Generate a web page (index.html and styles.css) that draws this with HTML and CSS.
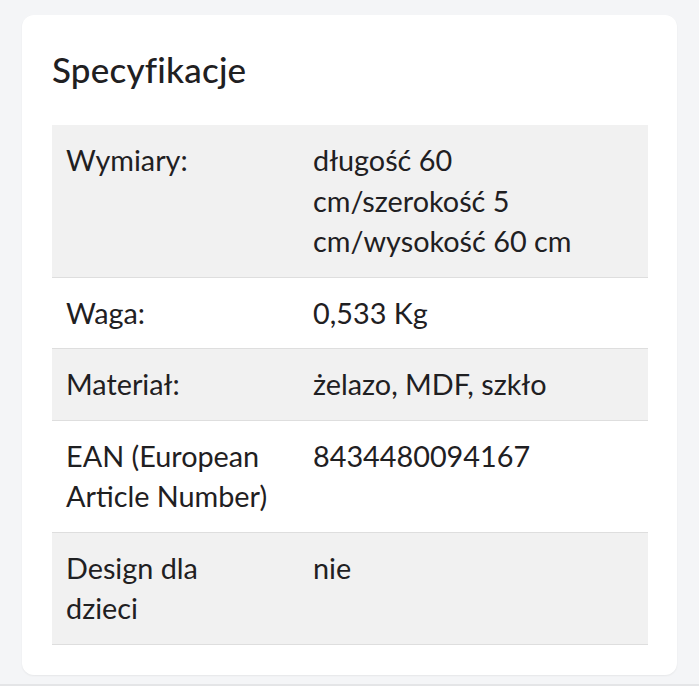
FILE: index.html
```html
<!DOCTYPE html>
<html lang="pl">
<head>
<meta charset="utf-8">
<title>Specyfikacje</title>
<link rel="stylesheet" href="styles.css">
</head>
<body>
<div class="page">
  <section class="card">
    <h2 class="title">Specyfikacje</h2>
    <div class="specs">
      <div class="row alt">
        <div class="label">Wymiary:</div>
        <div class="value">długość 60<br>cm/szerokość 5<br>cm/wysokość 60 cm</div>
      </div>
      <div class="row">
        <div class="label">Waga:</div>
        <div class="value">0,533 Kg</div>
      </div>
      <div class="row alt">
        <div class="label">Materiał:</div>
        <div class="value">żelazo, MDF, szkło</div>
      </div>
      <div class="row">
        <div class="label">EAN (European<br>Article Number)</div>
        <div class="value">8434480094167</div>
      </div>
      <div class="row alt">
        <div class="label">Design dla<br>dzieci</div>
        <div class="value">nie</div>
      </div>
    </div>
  </section>
</div>
<div class="footer"></div>
</body>
</html>
```

FILE: styles.css
```css
html, body {
  margin: 0;
  padding: 0;
  background: #ffffff;
  font-family: "Lato", "Noto Sans", sans-serif;
  color: #1f2022;
}

.page {
  background: #f4f5f7;
  padding: 15px 22px 9px 22px;
  border-bottom: 2px solid #e4e5e7;
}

.card {
  background: #ffffff;
  border-radius: 12px;
  box-shadow: 0 1px 2px rgba(0, 0, 0, 0.06);
  padding: 34px 29px 30px 30px;
}

.title {
  margin: 0 0 36px 0;
  font-size: 35px;
  line-height: 40px;
  font-weight: 500;
  letter-spacing: 0.2px;
}

.specs {
  display: flex;
  flex-direction: column;
}

.row {
  display: grid;
  grid-template-columns: 247px 1fr;
  border-bottom: 1px solid #dedede;
  background: #ffffff;
  font-size: 28.8px;
  line-height: 40.5px;
}

.row.alt {
  background: #f1f1f1;
}

.label {
  padding: 15px 14px;
}

.value {
  padding: 15px 14px;
}

.footer {
  height: 14px;
  background: #ffffff;
}
```
